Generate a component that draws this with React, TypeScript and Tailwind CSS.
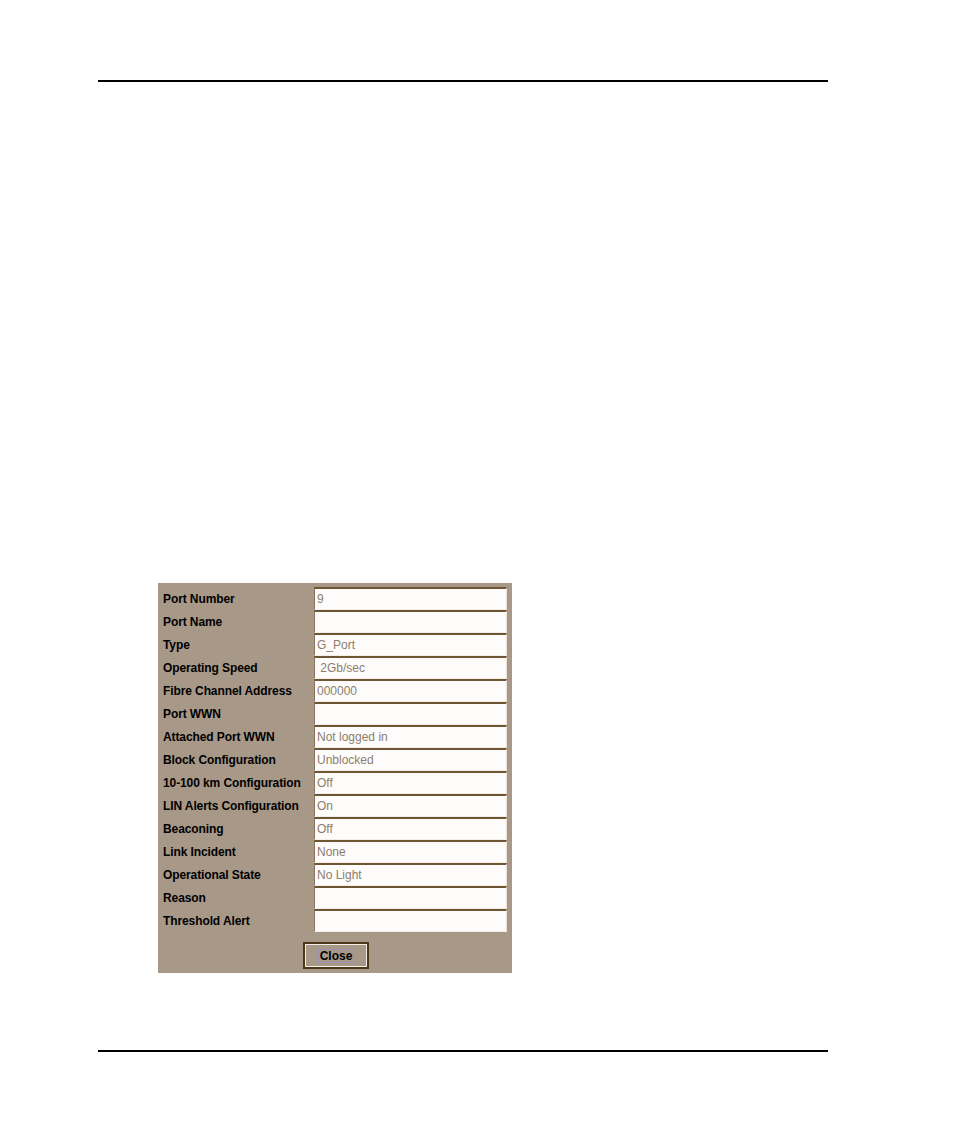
import React from "react";

const rows: { label: string; value: string }[] = [
  { label: "Port Number", value: "9" },
  { label: "Port Name", value: "" },
  { label: "Type", value: "G_Port" },
  { label: "Operating Speed", value: " 2Gb/sec" },
  { label: "Fibre Channel Address", value: "000000" },
  { label: "Port WWN", value: "" },
  { label: "Attached Port WWN", value: "Not logged in" },
  { label: "Block Configuration", value: "Unblocked" },
  { label: "10-100 km Configuration", value: "Off" },
  { label: "LIN Alerts Configuration", value: "On" },
  { label: "Beaconing", value: "Off" },
  { label: "Link Incident", value: "None" },
  { label: "Operational State", value: "No Light" },
  { label: "Reason", value: "" },
  { label: "Threshold Alert", value: "" },
];

export default function App() {
  return (
    <div className="relative w-[954px] h-[1145px] bg-white font-['Liberation_Sans',Arial,sans-serif]">
      {/* header rule */}
      <div className="pt-[80px] pl-[98px]">
        <div className="w-[730px] h-[2px] bg-black" />
      </div>

      {/* port properties dialog */}
      <div className="pl-[158px] pt-[501px]">
        <div className="w-[354px] h-[390px] bg-[#a89888] pt-[4px] px-[5px] flex flex-col">
          <div className="flex flex-col">
            {rows.map((r) => (
              <div key={r.label} className="flex items-center h-[23px]">
                <span className="w-[151px] text-[12px] font-bold text-black tracking-[-0.1px] leading-none">
                  {r.label}
                </span>
                <div className="w-[193px] h-[23px] bg-[#fdfcfa] border-t-2 border-t-[#6e5534] border-l border-l-[#8a7358] border-r border-r-[#e9e2da] border-b border-b-[#f3eee8] flex items-center pl-[2px]">
                  <span className="text-[12px] text-[#8c7d6e] whitespace-pre leading-none">{r.value}</span>
                </div>
              </div>
            ))}
          </div>
          <div className="flex pt-[10px] pl-[140px]">
            <button className="w-[66px] h-[27px] border-2 border-[#4a3818] bg-[#a89888] flex items-center justify-center p-0">
              <span className="w-full h-full border border-[#f2ede6] flex items-center justify-center">
                <span className="border border-[#9c90b4] px-[1px] leading-none text-[12px] font-bold text-black">
                  Close
                </span>
              </span>
            </button>
          </div>
        </div>
      </div>

      {/* footer rule */}
      <div className="pt-[77px] pl-[98px]">
        <div className="w-[730px] h-[2px] bg-black" />
      </div>
    </div>
  );
}
